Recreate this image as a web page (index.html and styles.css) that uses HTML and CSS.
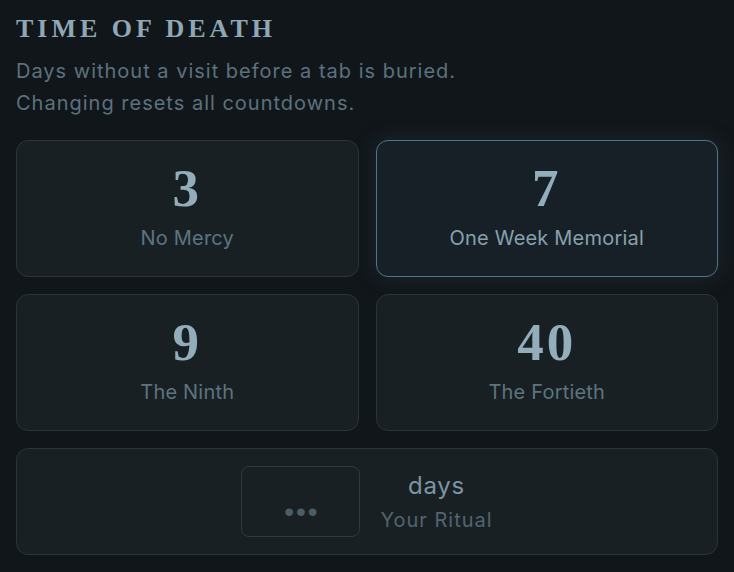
FILE: index.html
```html
<!DOCTYPE html>
<html lang="en">
<head>
<meta charset="utf-8">
<title>Time of Death</title>
<link rel="stylesheet" href="styles.css">
</head>
<body>
<main class="panel">
  <h1 class="title">Time of Death</h1>
  <p class="subtitle">Days without a visit before a tab is buried.<br>Changing resets all countdowns.</p>
  <div class="options">
    <button class="option" type="button">
      <span class="num">3</span>
      <span class="label">No Mercy</span>
    </button>
    <button class="option selected" type="button">
      <span class="num">7</span>
      <span class="label">One Week Memorial</span>
    </button>
    <button class="option" type="button">
      <span class="num">9</span>
      <span class="label">The Ninth</span>
    </button>
    <button class="option" type="button">
      <span class="num">40</span>
      <span class="label">The Fortieth</span>
    </button>
    <div class="option custom">
      <input class="custom-input" type="text" placeholder="...">
      <div class="custom-text">
        <span class="days">days</span>
        <span class="ritual">Your Ritual</span>
      </div>
    </div>
  </div>
</main>
</body>
</html>
```

FILE: styles.css
```css
* { box-sizing: border-box; }

html, body {
  margin: 0;
  background: #11161a;
}

body {
  font-family: Inter, "Noto Sans", sans-serif;
  color: #5e7480;
}

.panel {
  padding: 14px 16px 0;
}

.title {
  margin: 0;
  font-family: "Liberation Serif", serif;
  font-weight: 700;
  font-size: 26px;
  line-height: 30px;
  letter-spacing: 4px;
  text-transform: uppercase;
  color: #8fa8b5;
}

.subtitle {
  margin: 11px 0 0;
  font-size: 20px;
  line-height: 32px;
  letter-spacing: 1px;
  color: #5c727e;
}

.options {
  margin-top: 21px;
  display: grid;
  grid-template-columns: 1fr 1fr;
  gap: 17px;
}

.option {
  display: flex;
  flex-direction: column;
  align-items: center;
  padding: 21px 0 26px;
  background: #192024;
  border: 1px solid #2b3438;
  border-radius: 12px;
  font: inherit;
  color: inherit;
  cursor: pointer;
}

.option.selected {
  background: #172027;
  border-color: #4f7687;
  box-shadow: 0 0 22px rgba(70, 110, 130, 0.22);
}

.num {
  font-family: "Liberation Serif", serif;
  font-weight: 700;
  font-size: 53px;
  line-height: 52px;
  letter-spacing: 3px;
  color: #93aebb;
}

.label {
  margin-top: 12px;
  font-size: 20px;
  line-height: 24px;
  color: #5d7480;
  letter-spacing: 0.2px;
}

.selected .label {
  color: #87a0ad;
}

.custom {
  grid-column: 1 / -1;
  flex-direction: row;
  justify-content: center;
  gap: 20px;
  padding: 17px 0;
  cursor: default;
}

.custom-input {
  width: 119px;
  height: 71px;
  padding: 0 0 4px;
  background: #192024;
  border: 1px solid #2f393e;
  border-radius: 8px;
  font-family: "Liberation Serif", serif;
  font-weight: 700;
  font-size: 47px;
  color: #93aebb;
  text-align: center;
  outline: none;
}

.custom-input::placeholder {
  color: #4b5d66;
}

.custom-text {
  display: flex;
  flex-direction: column;
  align-items: center;
  gap: 8px;
}

.days {
  font-size: 24px;
  line-height: 28px;
  color: #7b95a2;
  letter-spacing: 0.8px;
}

.ritual {
  font-size: 20px;
  line-height: 24px;
  color: #51656e;
  letter-spacing: 1px;
}
```
